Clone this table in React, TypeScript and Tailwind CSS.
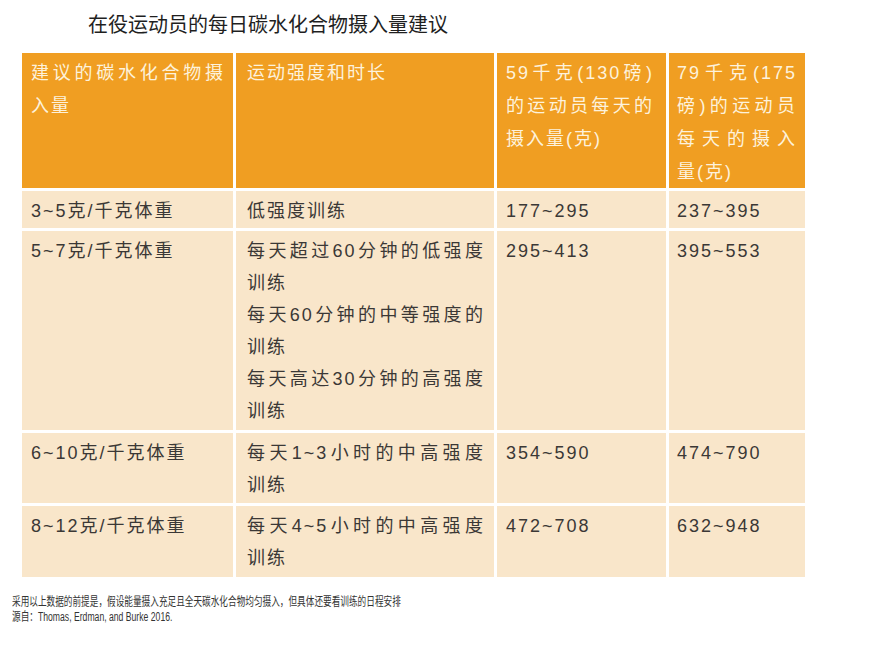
const font = { fontFamily: '"Liberation Sans", "Noto Sans CJK SC", sans-serif' };

type Line = { t: string; j?: boolean };

const header: Line[][] = [
  [{ t: "建议的碳水化合物摄", j: true }, { t: "入量" }],
  [{ t: "运动强度和时长" }],
  [{ t: "59千克(130磅)", j: true }, { t: "的运动员每天的", j: true }, { t: "摄入量(克)" }],
  [{ t: "79千克(175", j: true }, { t: "磅)的运动员", j: true }, { t: "每天的摄入", j: true }, { t: "量(克)" }],
];

const rows: Line[][][] = [
  [[{ t: "3~5克/千克体重" }], [{ t: "低强度训练" }], [{ t: "177~295" }], [{ t: "237~395" }]],
  [
    [{ t: "5~7克/千克体重" }],
    [
      { t: "每天超过60分钟的低强度", j: true },
      { t: "训练" },
      { t: "每天60分钟的中等强度的", j: true },
      { t: "训练" },
      { t: "每天高达30分钟的高强度", j: true },
      { t: "训练" },
    ],
    [{ t: "295~413" }],
    [{ t: "395~553" }],
  ],
  [
    [{ t: "6~10克/千克体重" }],
    [{ t: "每天1~3小时的中高强度", j: true }, { t: "训练" }],
    [{ t: "354~590" }],
    [{ t: "474~790" }],
  ],
  [
    [{ t: "8~12克/千克体重" }],
    [{ t: "每天4~5小时的中高强度", j: true }, { t: "训练" }],
    [{ t: "472~708" }],
    [{ t: "632~948" }],
  ],
];

const padX = ["pl-[9px] pr-[8px]", "pl-[11px] pr-[9px]", "pl-[9px] pr-[12px]", "pl-[8px] pr-[8px]"];

function Cell({ lines, head, col }: { lines: Line[]; head?: boolean; col: number }) {
  return (
    <div
      className={`${head ? "bg-[#f09e22] text-[#fdf2dc] leading-[33px]" : "bg-[#f9e6ca] text-[#3b3836] leading-[32px]"} ${padX[col]} pt-[4px] text-[18px] tracking-[2px]`}
    >
      {lines.map((l, i) => (
        <div key={i} className={l.j ? "text-justify [text-align-last:justify] whitespace-nowrap" : "whitespace-nowrap"}>
          {l.t}
        </div>
      ))}
    </div>
  );
}

export default function App() {
  return (
    <div className="w-[874px] h-[648px] bg-white overflow-hidden" style={font}>
      <div className="pt-[13px] pl-[88px] text-[20px] leading-[24px] text-[#1f1f1f]">
        在役运动员的每日碳水化合物摄入量建议
      </div>

      {/* table */}
      <div className="mt-[16px] ml-[22px] grid grid-cols-[211px_258px_169px_136px] grid-rows-[135px_37px_199px_70px_71px] gap-[3px]">
        {header.map((lines, c) => (
          <Cell key={`h${c}`} lines={lines} head col={c} />
        ))}
        {rows.map((r, ri) =>
          r.map((lines, c) => <Cell key={`${ri}-${c}`} lines={lines} col={c} />)
        )}
      </div>

      <div className="mt-[18px] pl-[12px] text-[12px] leading-[15px] text-[#333]">
        <div className="origin-left scale-x-[0.72] whitespace-nowrap">
          采用以上数据的前提是，假设能量摄入充足且全天碳水化合物均匀摄入，但具体还要看训练的日程安排
        </div>
        <div className="origin-left scale-x-[0.72] whitespace-nowrap">源自：Thomas, Erdman, and Burke 2016.</div>
      </div>
    </div>
  );
}
